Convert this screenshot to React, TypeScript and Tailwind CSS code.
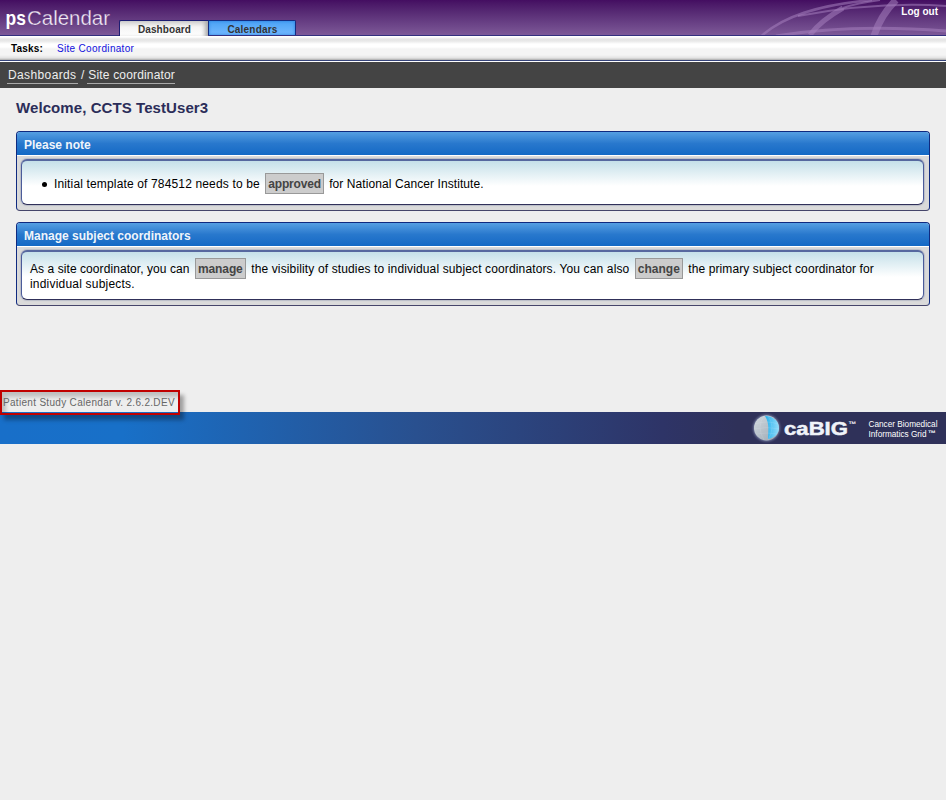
import type { ReactNode } from "react";

function Logo() {
  return (
    <svg width="112" height="35" viewBox="0 0 112 35" className="ml-[5px] shrink-0">
      <text transform="translate(0.5 25) scale(0.83 1)" x="0" y="0" fill="#fff" fontFamily="'Liberation Sans', Arial, sans-serif" fontSize="21" fontWeight="700">
        ps
      </text>
      <text x="22" y="25" fill="#f1eaf5" fontFamily="'Liberation Sans', Arial, sans-serif" fontSize="21" textLength="83" lengthAdjust="spacingAndGlyphs" stroke="#5b2d78" strokeWidth="0.25">
        Calendar
      </text>
    </svg>
  );
}

function HeaderArcs() {
  return (
    <svg width="206" height="35" viewBox="0 0 206 35" className="absolute right-0 top-0" fill="none">
      <g stroke="#a57fbd" strokeOpacity="0.55">
        <path d="M22 35.500C43 17 76 5 132 0" strokeWidth="2.500" />
        <path d="M58 16C96 9 150 2 206 6" strokeWidth="2" />
        <path d="M70 35C78 24 89 16 103 8" strokeWidth="5" />
        <path d="M103 8C114 4 125 2 140 0" strokeWidth="2" />
        <path d="M134 36C138 23 145 11 156 0" strokeWidth="7" />
        <path d="M36 36C85 28 140 26 206 31" strokeWidth="3" />
      </g>
    </svg>
  );
}

function Action({ children }: { children: string }) {
  return (
    <a className="mx-[2px] -my-[4px] inline-block h-[21px] border border-[#999] bg-[#ccc] px-[2px] text-center font-bold leading-[21px] text-[#444]">
      {children}
    </a>
  );
}

function Panel({ title, bodyClass, children }: { title: string; bodyClass: string; children: ReactNode }) {
  return (
    <section className="overflow-hidden rounded-[4px] border border-[#0f2a80] border-b-[#45456a] bg-[#dadada]">
      <h2 className="h-[23px] bg-linear-to-b from-[#559fe2] via-[#2878cd] via-50% to-[#1369c5] pl-[7px] text-[12px] font-bold leading-[27px] text-[#f0f5fb]">
        {title}
      </h2>
      <div className="border-t border-white pb-[5px] pl-[4px] pr-[5px] pt-[3px]">
        <div
          className={`overflow-hidden rounded-[6px] border border-t-2 border-x-[#4c5c9a] border-b-[#303059] border-t-[#56689f] bg-white bg-[linear-gradient(to_bottom,#c5e0e9_0px,#ffffff_25px)] text-[12px] leading-[15px] text-black shadow-[0_0_1px_1px_#b9bcc7] ${bodyClass}`}
        >
          {children}
        </div>
      </div>
    </section>
  );
}

function FooterLogo() {
  return (
    <svg width="200" height="32" viewBox="0 0 200 32" className="shrink-0">
      <defs>
        <radialGradient id="halo">
          <stop offset="0.7" stopColor="#b8c4e6" stopOpacity="0.8" />
          <stop offset="1" stopColor="#2f3159" stopOpacity="0" />
        </radialGradient>
        <linearGradient id="globe" x1="0" y1="0" x2="1" y2="1">
          <stop offset="0" stopColor="#d3dae0" />
          <stop offset="1" stopColor="#99a5b0" />
        </linearGradient>
        <linearGradient id="wedge" x1="0" y1="0" x2="1" y2="0">
          <stop offset="0" stopColor="#24b0ec" />
          <stop offset="1" stopColor="#93dcfa" />
        </linearGradient>
      </defs>
      <circle cx="20.500" cy="16" r="16" fill="url(#halo)" />
      <circle cx="20.500" cy="16" r="12.500" fill="url(#globe)" />
      <path d="M19 4C28 4 33 10 33 16S28 26 22 27C22 20 24 12 19 4Z" fill="url(#wedge)" />
      <g fill="none" stroke="#eef7fb" strokeOpacity="0.2" strokeWidth="0.600">
        <path d="M9 12Q21 8 32 12M8 17Q21 14 33 17M10 22Q21 20 31 22M18 4Q10 15 18 28M22 4Q30 15 22 28" />
      </g>
      <g fill="#fff" fontFamily="'Liberation Sans', Arial, sans-serif">
        <text x="38" y="22.500" fontSize="19" fontWeight="700" fill="#f0f3f9" stroke="#f0f3f9" strokeWidth="0.5" textLength="64" lengthAdjust="spacingAndGlyphs">caBIG</text>
        <text x="102.500" y="15" fontSize="8" fontWeight="700">™</text>
        <text x="122.500" y="14.500" fontSize="8.500" textLength="69" lengthAdjust="spacingAndGlyphs">Cancer Biomedical</text>
        <text x="122.500" y="24.500" fontSize="8.500" textLength="58" lengthAdjust="spacingAndGlyphs">Informatics Grid</text>
        <text x="182" y="24" fontSize="8" fontWeight="700">™</text>
      </g>
    </svg>
  );
}

export default function App() {
  return (
    <div className="h-[800px] w-[946px] overflow-hidden bg-[#eee] font-['Liberation_Sans',Arial,sans-serif]">
      <header className="relative flex h-[36px] border-b border-[#33307f] bg-linear-to-b from-[#440d61] to-[#7d5998]">
        <HeaderArcs />
        <Logo />
        <nav className="relative mt-[20px] ml-[2px] flex h-[16px] text-[10px] font-bold leading-[18px] text-[#333]">
          <a className="h-[16px] w-[89px] rounded-tl-[2px] border-l border-t border-[#1d1d72] bg-linear-to-b from-[#d0d0d0] via-[#f4f4f4] via-40% to-white pl-px text-center tracking-[0.1px] shadow-[inset_-5px_0_4px_-2px_#aaa]">
            Dashboard
          </a>
          <a className="h-[15px] w-[88px] rounded-tr-[2px] border border-b-0 border-[#142c82] bg-linear-to-b from-[#4aa2f5] to-[#72b9ff] pl-px text-center tracking-[0.2px] shadow-[inset_0_0_3px_#287edc]">
            Calendars
          </a>
        </nav>
        <a className="relative ml-auto mr-[8px] mt-[5px] text-[10px] font-bold leading-[14px] text-white">Log out</a>
      </header>
      <div className="flex h-[25px] border-b border-[#37457c] bg-[linear-gradient(to_bottom,#fff_0px,#fff_1px,#e6e6e6_3px,#e8e8e8_5px,#fff_8px,#fff_11px,#f4f4f4_13px,#f4f4f4_19px,#e2e2e2_22px,#aaa_24px)] pl-[11px] text-[10px] leading-[25px]">
        <b className="w-[46px] tracking-[0.2px]">Tasks:</b>
        <a className="tracking-[0.31px] text-[#1111dd]">Site Coordinator</a>
      </div>
      <div className="mt-px flex h-[26px] bg-[#444] pl-[7px] text-[12px] leading-[15px] text-[#eee] shadow-[0_-1px_0_#fff]">
        <a className="mt-[6px] h-[16px] w-[71px] border-b border-[#aaa] pl-px tracking-[0.38px]">Dashboards</a>
        <span className="mx-[3px] mt-[6px]">/</span>
        <a className="mt-[6px] h-[16px] w-[88px] border-b border-[#aaa] pl-px tracking-[0.16px]">Site coordinator</a>
      </div>
      <main className="flex h-[302px] flex-col px-[16px] pt-[11px]">
        <h1 className="mb-[15px] h-[17px] text-[15px] font-bold leading-[18px] tracking-[0.08px] text-[#2b2d59]">Welcome, CCTS TestUser3</h1>
        <div className="flex w-[914px] flex-col gap-[11px]">
          <Panel title="Please note" bodyClass="h-[46px] pl-[20px] pt-[16px]">
            <ul>
              <li className="flex items-center whitespace-pre">
                <span className="mr-[7px] size-[5px] rounded-full bg-black" />
                <p>
                  <span className="tracking-[0.15px]">Initial template of 784512 needs to be </span>
                  <span className="tracking-[-0.2px]"><Action>approved</Action></span>
                  <span className="tracking-[0.08px]"> for National Cancer Institute.</span>
                </p>
              </li>
            </ul>
          </Panel>
          <Panel title="Manage subject coordinators" bodyClass="h-[50px] pl-[8px] pt-[10px]">
            <p>
              <span className="tracking-[0.07px]">As a site coordinator, you can </span>
              <span className="tracking-[-0.1px]"><Action>manage</Action></span>
              <span className="tracking-[0.135px]"> the visibility of studies to individual subject coordinators. You can also </span>
              <Action>change</Action>
              <span className="tracking-[0.1px]"> the primary subject coordinator for</span>
              <br />
              <span className="tracking-[0.2px]">individual subjects.</span>
            </p>
          </Panel>
        </div>
      </main>
      <footer>
        <div className="relative flex h-[25px] w-[180px] items-center whitespace-nowrap border-2 border-[#c00000] pl-px text-[10px] tracking-[0.31px] text-[#666] shadow-[4px_5px_4px_#0005,inset_4px_5px_4px_#0003]">
          Patient Study Calendar v. 2.6.2.DEV
        </div>
        <div className="-mt-[3px] flex h-[32px] justify-end bg-[linear-gradient(to_right,#186fc9_0%,#1870c8_13%,#29508f_44%,#2e3467_70%,#2f3159_78%,#2f3159_100%)]">
          <FooterLogo />
        </div>
      </footer>
    </div>
  );
}
